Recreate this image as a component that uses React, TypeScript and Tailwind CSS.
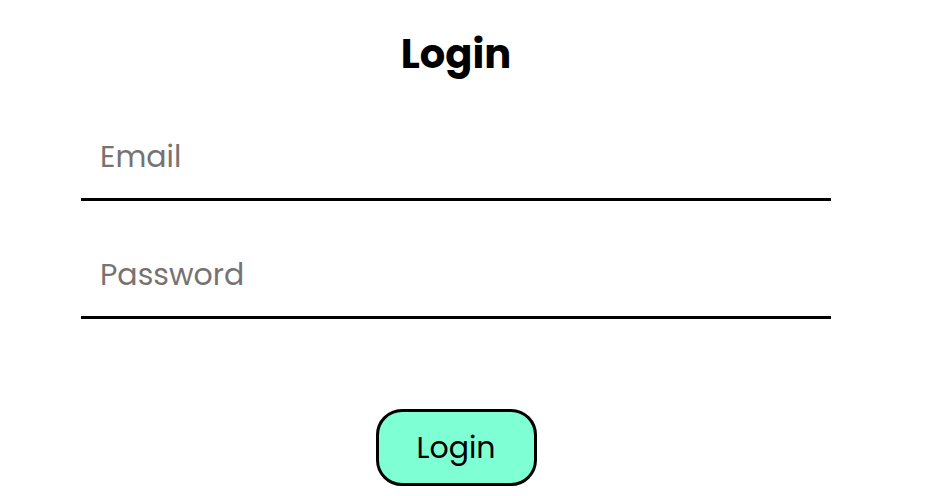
export default function App() {
    return (
        <div className="min-h-[496px] bg-white" style={{ fontFamily: "Poppins, 'Open Sans', sans-serif" }}>
            <form className="w-[750px] ml-[81px] flex flex-col">
                <h1 className="mt-[24px] h-[60px] leading-[60px] text-center text-[40px] font-bold text-black">
                    Login
                </h1>
                <input
                    type="email"
                    placeholder="Email"
                    className="mt-[32px] h-[85px] px-[19px] text-[30px] text-black placeholder:text-[#777373] border-b-[3px] border-black outline-none"
                />
                <input
                    type="password"
                    placeholder="Password"
                    className="mt-[33px] h-[85px] px-[19px] text-[30px] text-black placeholder:text-[#777373] border-b-[3px] border-black outline-none"
                />
                <div className="mt-[90px] flex justify-center">
                    <button
                        type="button"
                        className="w-[161px] h-[77px] rounded-[26px] border-[3px] border-black bg-[#7fffd4] text-[30px] text-black"
                    >
                        Login
                    </button>
                </div>
            </form>
        </div>
    )
}
